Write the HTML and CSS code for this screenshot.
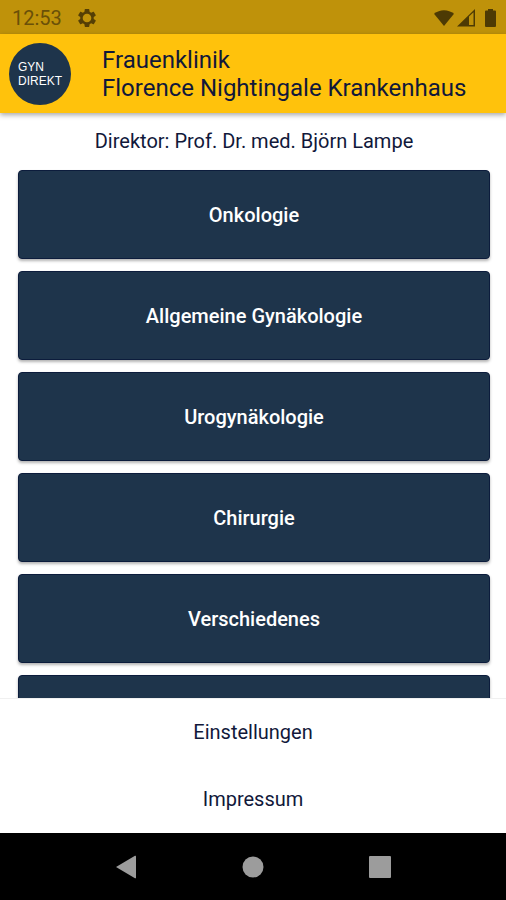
FILE: index.html
```html
<!DOCTYPE html>
<html lang="de">
<head>
  <meta charset="UTF-8" />
  <meta name="viewport" content="width=device-width, initial-scale=1.0"/>
  <title>GYN Direkt</title>
  <link rel="stylesheet" href="styles.css">
</head>
<body>
  <div class="statusbar">
    <span class="clock">12:53</span>
    <svg class="gear" width="18" height="18" viewBox="2 2 20 20">
      <path fill-rule="evenodd" d="M19.43 12.98c.04-.32.07-.64.07-.98s-.03-.66-.07-.98l2.11-1.65c.19-.15.24-.42.12-.64l-2-3.46c-.12-.22-.39-.3-.61-.22l-2.49 1c-.52-.4-1.08-.73-1.69-.98l-.38-2.65C14.46 2.18 14.25 2 14 2h-4c-.25 0-.46.18-.49.42l-.38 2.65c-.61.25-1.17.59-1.69.98l-2.49-1c-.23-.09-.49 0-.61.22l-2 3.46c-.13.22-.07.49.12.64l2.11 1.65c-.04.32-.07.65-.07.98s.03.66.07.98l-2.11 1.65c-.19.15-.24.42-.12.64l2 3.46c.12.22.39.3.61.22l2.49-1c.52.4 1.08.73 1.69.98l.38 2.65c.03.24.24.42.49.42h4c.25 0 .46-.18.49-.42l.38-2.65c.61-.25 1.17-.59 1.69-.98l2.49 1c.23.09.49 0 .61-.22l2-3.46c.12-.22.07-.49-.12-.64l-2.11-1.65zM12 16.800a4.800 4.800 0 1 1 0-9.600 4.800 4.800 0 0 1 0 9.600z"/>
    </svg>
    <div class="status-icons">
      <svg width="20" height="18" viewBox="0 0 21 18">
        <path d="M0 4.500C6 -.5 15 -.5 21 4.500L10.500 17.500z"/>
      </svg>
      <svg width="18" height="18" viewBox="0 0 18 18">
        <path fill-rule="evenodd" d="M0 17.500L18 0v17.500zM12 7.500v8.500h4.500V3.300z"/>
      </svg>
      <svg class="battery" width="11" height="18" viewBox="0 0 11 18">
        <path d="M3 0h5v1.500h2a1 1 0 0 1 1 1V17a1 1 0 0 1-1 1H1a1 1 0 0 1-1-1V2.500a1 1 0 0 1 1-1h2z"/>
      </svg>
    </div>
  </div>

  <header class="header">
    <div class="logo">GYN<br>DIREKT</div>
    <h1>Frauenklinik<br>Florence Nightingale Krankenhaus</h1>
  </header>

  <main class="content">
    <p class="director">Direktor: Prof. Dr. med. Björn Lampe</p>
    <div class="topics">
      <button class="topic">Onkologie</button>
      <button class="topic">Allgemeine Gynäkologie</button>
      <button class="topic">Urogynäkologie</button>
      <button class="topic">Chirurgie</button>
      <button class="topic">Verschiedenes</button>
      <button class="topic"></button>
    </div>
  </main>

  <footer class="footer">
    <a href="#">Einstellungen</a>
    <a href="#">Impressum</a>
  </footer>

  <div class="navbar">
    <button aria-label="Zurück">
      <svg width="24" height="24" viewBox="0 0 24 24"><path d="M1 12L20 .8q1-.5 1 .5v21.400q0 1-1 .5z"/></svg>
    </button>
    <button aria-label="Home">
      <svg width="24" height="24" viewBox="0 0 24 24"><circle cx="12" cy="12" r="10.500"/></svg>
    </button>
    <button aria-label="Übersicht">
      <svg width="24" height="24" viewBox="0 0 24 24"><rect x="1" y="1" width="22" height="22" rx="1"/></svg>
    </button>
  </div>
</body>
</html>
```
FILE: styles.css
```css
* {
  box-sizing: border-box;
}

body {
  margin: 0;
  height: 100vh;
  display: flex;
  flex-direction: column;
  font-family: Roboto, sans-serif;
  font-size: 20px;
  color: #11183a;
  background: #fff;
}

.statusbar {
  display: flex;
  align-items: center;
  flex: none;
  height: 34px;
  padding: 1px 10px 0 12px;
  background: #bf920a;
  color: #6a5008;
}

.clock {
  font-size: 20px;
}

.gear {
  margin-left: 16px;
  fill: #553f05;
}

.status-icons {
  display: flex;
  gap: 3px;
  margin-left: auto;
  fill: #4d3a04;
}

.battery {
  margin-left: 7px;
}

.header {
  display: flex;
  align-items: center;
  flex: none;
  height: 79px;
  padding: 0 9px;
  gap: 31px;
  background: #ffc20c;
  box-shadow: 0 2px 5px rgba(0, 0, 0, 0.35);
  z-index: 1;
}

.logo {
  display: flex;
  align-items: center;
  flex: none;
  width: 62px;
  height: 62px;
  padding-left: 9px;
  border-radius: 50%;
  background: #1e344b;
  color: #fff;
  font-family: "Liberation Sans", Arial, sans-serif;
  font-size: 12px;
  line-height: 14px;
}

.header h1 {
  margin: 0;
  font-size: 24px;
  font-weight: 400;
  line-height: 28px;
}

.content {
  flex: 1;
  min-height: 0;
  overflow: hidden;
  padding: 16px 16px 0 18px;
}

.director {
  margin: 0 0 17px;
  line-height: 24px;
  text-align: center;
}

.topics {
  display: flex;
  flex-direction: column;
  gap: 12px;
}

.topic {
  flex: none;
  height: 89px;
  border: 1px solid #0c1c3c;
  border-radius: 4px;
  background: #1e344b;
  color: #fff;
  font-family: inherit;
  font-size: 20px;
  font-weight: 500;
  box-shadow: 0 2px 3px rgba(0, 0, 0, 0.3);
}

.footer {
  display: flex;
  flex-direction: column;
  flex: none;
  border-top: 1px solid #f0f0f0;
  background: #fff;
}

.footer a {
  color: inherit;
  line-height: 67px;
  text-align: center;
  text-decoration: none;
}

.navbar {
  display: grid;
  grid-template-columns: repeat(3, 25%);
  justify-content: center;
  flex: none;
  height: 67px;
  background: #000;
}

.navbar button {
  display: flex;
  align-items: center;
  justify-content: center;
  padding: 0;
  border: 0;
  background: none;
}

.navbar svg {
  fill: #9c9c9c;
}
```
